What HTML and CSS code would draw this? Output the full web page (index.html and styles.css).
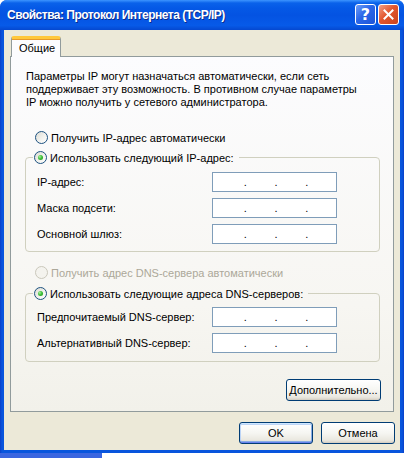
FILE: index.html
```html
<!DOCTYPE html>
<html lang="ru">
<head>
<meta charset="utf-8">
<title>Свойства: Протокол Интернета (TCP/IP)</title>
<link rel="stylesheet" href="styles.css">
</head>
<body>
<div class="window">
  <div class="titlebar">
    <span class="title">Свойства: Протокол Интернета (TCP/IP)</span>
    <div class="caption-buttons">
      <span class="cbtn help">?</span>
      <span class="cbtn close"><svg width="11" height="11" viewBox="0 0 11 11"><path d="M1.5 1.5 L9.5 9.5 M9.5 1.5 L1.5 9.5" stroke="#fff" stroke-width="2" stroke-linecap="square"/></svg></span>
    </div>
  </div>
  <div class="frame">
    <div class="client">
      <div class="tabs"><div class="tab active">Общие</div></div>
      <div class="panel">
        <p class="intro">Параметры IP могут назначаться автоматически, если сеть<br>поддерживает эту возможность. В противном случае параметры<br>IP можно получить у сетевого администратора.</p>
        <label class="radio first"><span class="rb"></span>Получить IP-адрес автоматически</label>
        <fieldset class="group ip">
          <legend><label class="radio"><span class="rb checked"></span>Использовать следующий IP-адрес:</label></legend>
          <div class="row"><span class="lbl">IP-адрес:</span><span class="ipfield"><i></i><b>.</b><i></i><b>.</b><i></i><b>.</b><i></i></span></div>
          <div class="row"><span class="lbl">Маска подсети:</span><span class="ipfield"><i></i><b>.</b><i></i><b>.</b><i></i><b>.</b><i></i></span></div>
          <div class="row"><span class="lbl">Основной шлюз:</span><span class="ipfield"><i></i><b>.</b><i></i><b>.</b><i></i><b>.</b><i></i></span></div>
        </fieldset>
        <label class="radio disabled dnsauto"><span class="rb"></span>Получить адрес DNS-сервера автоматически</label>
        <fieldset class="group dns">
          <legend><label class="radio"><span class="rb checked"></span>Использовать следующие адреса DNS-серверов:</label></legend>
          <div class="row first-row"><span class="lbl">Предпочитаемый DNS-сервер:</span><span class="ipfield"><i></i><b>.</b><i></i><b>.</b><i></i><b>.</b><i></i></span></div>
          <div class="row"><span class="lbl">Альтернативный DNS-сервер:</span><span class="ipfield"><i></i><b>.</b><i></i><b>.</b><i></i><b>.</b><i></i></span></div>
        </fieldset>
        <div class="adv-row"><button class="btn adv">Дополнительно...</button></div>
      </div>
      <div class="buttons">
        <button class="btn default">OK</button>
        <button class="btn">Отмена</button>
      </div>
    </div>
  </div>
</div>
<div class="strip"><div class="strip-blue"></div></div>
</body>
</html>
```
FILE: styles.css
```css
* { box-sizing: border-box; }
html, body { margin: 0; padding: 0; }
body {
  width: 407px;
  height: 458px;
  overflow: hidden;
  background: #fff;
  font-family: "Liberation Sans", Arial, sans-serif;
  font-size: 11px;
  color: #000;
}

.window {
  width: 404px;
  height: 453px;
  display: flex;
  flex-direction: column;
  border-radius: 7px 7px 0 0;
  overflow: hidden;
  background: #0a4fd6;
}

.titlebar {
  height: 30px;
  flex: none;
  display: flex;
  align-items: center;
  padding: 0 5px 1px 7px;
  background: linear-gradient(to bottom, #3d95ff 0, #0a62ea 3px, #0559e6 8px, #0453e2 50%, #075ae8 85%, #0548d0 100%);
}
.title {
  flex: 1;
  color: #fff;
  font-family: "Liberation Sans", Arial, sans-serif;
  font-weight: bold;
  font-size: 12px;
  letter-spacing: -0.5px;
  text-shadow: 1px 1px 0 #0b2b8c;
  white-space: nowrap;
}
.caption-buttons {
  display: flex;
  gap: 2px;
}
.cbtn {
  width: 21px;
  height: 21px;
  border: 1px solid #fff;
  border-radius: 3px;
  display: flex;
  align-items: center;
  justify-content: center;
}
.help {
  background: linear-gradient(135deg, #6d9df8 0%, #2a66e8 45%, #1d55d8 100%);
  color: #fff;
  font-weight: bold;
  font-size: 16px;
  font-family: "DejaVu Sans", sans-serif;
}
.close {
  background: linear-gradient(135deg, #f3a088 0%, #e2562e 45%, #c9431c 100%);
}

.frame {
  flex: 1;
  display: flex;
  padding: 0 4px 3px 4px;
  background: linear-gradient(to right, #0a3fc8, #0855dd 2px, #0855dd calc(100% - 2px), #0a3fc8);
}
.client {
  flex: 1;
  background: #ece9d8;
  display: flex;
  flex-direction: column;
  padding: 5px 6px 0 6px;
}

.tabs {
  height: 21px;
  display: flex;
  align-items: flex-end;
  padding-left: 1px;
}
.tab {
  height: 21px;
  width: 50px;
  background: #fcfcfe;
  border: 1px solid #919b9c;
  border-bottom: none;
  border-top: 3px solid #ffc83c;
  border-radius: 3px 3px 0 0;
  padding: 3px 0 0 7px;
  position: relative;
  z-index: 1;
  margin-bottom: -1px;
  box-shadow: inset 0 1px 0 #e89a2a;
}

.panel {
  height: 356px;
  border: 1px solid #919b9c;
  background: linear-gradient(to bottom, #fcfcfe 0%, #f7f6f2 70%, #f2f1ea 100%);
  padding: 13px 13px 0 15px;
  display: flex;
  flex-direction: column;
}
.intro {
  margin: 0;
  line-height: 13px;
  white-space: nowrap;
}

.radio {
  display: flex;
  align-items: center;
  height: 13px;
  white-space: nowrap;
}
.radio.first {
  margin: 22px 0 0 9px;
}
.rb {
  width: 13px;
  height: 13px;
  border-radius: 50%;
  border: 1px solid #1c5180;
  background: linear-gradient(135deg, #dcdcd4 0%, #f2f2ee 55%, #ffffff 100%);
  margin-right: 3px;
  flex: none;
  display: flex;
  align-items: center;
  justify-content: center;
}
.rb.checked::after {
  content: "";
  width: 5px;
  height: 5px;
  border-radius: 50%;
  background: radial-gradient(circle at 35% 35%, #a8f0a0 0%, #3fc03a 45%, #1a8f1a 100%);
}
.radio.disabled {
  color: #aca899;
}
.radio.disabled .rb {
  border-color: #cac8bb;
  background: #f4f3ee;
}
.dnsauto {
  margin: 14px 0 0 9px;
}

.group {
  margin: 7px 0 0 -1px;
  width: 355px;
  border: 1px solid #d0d0bf;
  border-radius: 4px;
  padding: 2px 0 7px 11px;
  min-width: 0;
}
.group legend {
  padding: 0 5px 0 1px;
  margin-left: -4px;
}
.group.dns {
  margin-top: 8px;
  padding-bottom: 8px;
}

.row {
  display: flex;
  align-items: center;
  height: 20px;
  margin-top: 6px;
}
.group.dns .row.first-row { margin-top: 5px; }
.lbl {
  width: 175px;
}
.ipfield {
  width: 125px;
  height: 20px;
  border: 1px solid #7f9db9;
  background: #fff;
  display: flex;
  align-items: center;
  padding: 0 0 0 3px;
}
.ipfield i {
  width: 28px;
}
.ipfield b {
  font-weight: normal;
  width: 3px;
  line-height: 20px;
}

.adv-row {
  display: flex;
  justify-content: flex-end;
  margin: 17px -1px 0 0;
}

.btn {
  font-family: "Liberation Sans", Arial, sans-serif;
  font-size: 11px;
  color: #000;
  height: 22px;
  border: 1px solid #003c74;
  border-radius: 3px;
  background: linear-gradient(to bottom, #ffffff 0%, #f6f6f2 50%, #eae8e0 85%, #d6d0c5 100%);
  padding: 0;
  box-shadow: inset 0 -1px 0 #d6d0c5;
}
.adv {
  width: 95px;
}
.buttons {
  display: flex;
  justify-content: flex-end;
  gap: 8px;
  margin-top: 10px;
  margin-right: -1px;
}
.buttons .btn {
  width: 74px;
}
.btn.default {
  box-shadow: inset 0 1px 0 #cee7ff, inset 0 -1px 0 #6982ee, inset 1px 0 0 #bcd4f6, inset -1px 0 0 #89ade4, inset 0 2px 0 #bcd4f6, inset 0 -2px 0 #89ade4;
}

.strip {
  height: 5px;
  background: #fff;
  display: flex;
}
.strip-blue {
  width: 102px;
  background: #3b66e0;
}
```
